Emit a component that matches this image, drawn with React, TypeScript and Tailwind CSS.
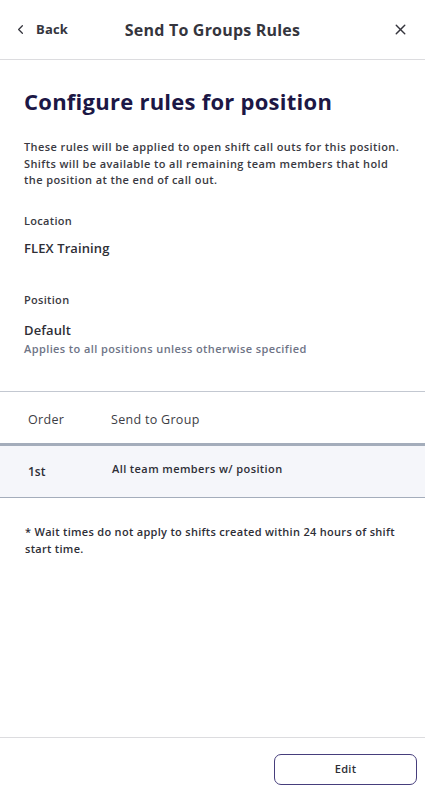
import { FiChevronLeft, FiX } from "react-icons/fi";

const rules = [{ order: "1st", group: "All team members w/ position" }];

const App = () => {
  return (
    <div
      className="h-screen w-full bg-white flex flex-col text-[#2b2b33]"
      style={{ fontFamily: "'Open Sans', 'Noto Sans', sans-serif" }}
    >
      {/* top bar */}
      <div className="h-[60px] shrink-0 border-b border-[#dcdcdf] flex items-center pl-[13px] pr-4 relative">
        <button className="flex items-center gap-[8px] text-[#35353d] relative z-10">
          <FiChevronLeft className="text-[15px]" strokeWidth={2} />
          <span className="text-[13px] font-bold tracking-[0.2px]">Back</span>
        </button>
        <h1 className="absolute left-0 right-0 text-center text-[16px] tracking-[0.2px] font-bold text-[#35353d] pointer-events-none">
          Send To Groups Rules
        </h1>
        <FiX className="ml-auto text-[17px] text-[#35353d]" strokeWidth={2} />
      </div>

      <div className="flex-1 flex flex-col">
        <div className="px-6 pt-[26px]">
          <h2 className="text-[22px] tracking-[0.25px] font-bold text-[#1c1745] leading-[30px]">
            Configure rules for position
          </h2>
          <p className="mt-[23px] text-[11px] tracking-[0.4px] leading-[16.5px] font-semibold text-[#3a3a42]">
            These rules will be applied to open shift call outs for this position. Shifts will be available to all
            remaining team members that hold the position at the end of call out.
          </p>

          <div className="mt-[24px] text-[11px] tracking-[0.3px] font-semibold text-[#3a3a42]">Location</div>
          <div className="mt-[10px] text-[13px] tracking-[0.1px] font-semibold text-[#2e2e36]">FLEX Training</div>

          <div className="mt-[33px] text-[11px] tracking-[0.3px] font-semibold text-[#3a3a42]">Position</div>
          <div className="mt-[13px] text-[13px] tracking-[0.1px] font-semibold text-[#2e2e36]">Default</div>
          <div className="text-[11px] tracking-[0.4px] font-semibold text-[#6e7486]">
            Applies to all positions unless otherwise specified
          </div>
        </div>

        {/* rules table */}
        <div className="mt-[34px] border-t border-[#c3c8d1]">
          <div className="h-[54px] pt-[6px] flex items-center px-7 text-[12.5px] tracking-[0.3px] text-[#3d3d45] font-medium border-b-[3px] border-[#a4adbb]">
            <span className="w-[83px]">Order</span>
            <span>Send to Group</span>
          </div>
          {rules.map((r) => (
            <div
              key={r.order}
              className="h-[52px] pb-[4px] flex items-center px-7 bg-[#f5f6fa] border-b border-[#a4adbb]"
            >
              <span className="w-[84px] text-[12px] font-semibold text-[#2e2e36] pt-[4px]">{r.order}</span>
              <span className="text-[11px] tracking-[0.4px] font-semibold text-[#2e2e36]">{r.group}</span>
            </div>
          ))}
        </div>

        <p className="px-[25px] mt-[26px] text-[11px] tracking-[0.3px] leading-[16.5px] font-semibold text-[#2e2e36]">
          * Wait times do not apply to shifts created within 24 hours of shift start time.
        </p>
      </div>

      {/* footer */}
      <div className="h-[54px] shrink-0 border-t border-[#dcdcdf] flex items-start justify-end px-2 pt-4">
        <button className="w-[143px] h-[31px] rounded-[7px] border border-[#463e7c] text-[11px] tracking-[0.3px] font-semibold text-[#2e2e36]">
          Edit
        </button>
      </div>
    </div>
  );
};

export default App;
